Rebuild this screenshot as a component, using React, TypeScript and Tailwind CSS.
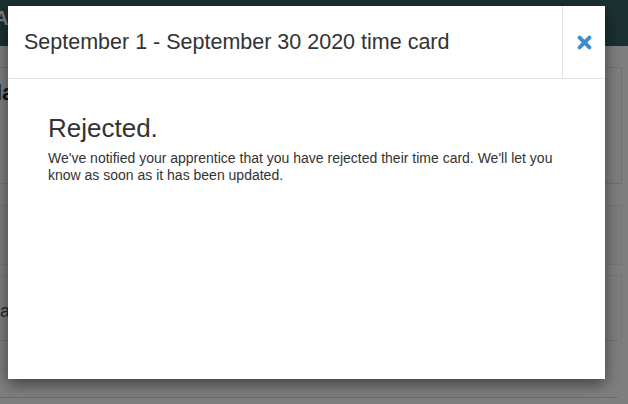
export default function App() {
  return (
    <div className="relative h-[404px] w-[628px] overflow-hidden bg-white font-['Liberation_Sans',Arial,sans-serif]">
      {/* page behind the modal */}
      <div className="h-[46px] bg-[#386262] pt-[6px] text-[20px] font-bold leading-[24px] text-white">
        <span className="-ml-[6px]">Ap</span>
      </div>
      <div className="flex flex-col pr-[6px]">
        <div className="mt-[21px] h-[117px] border border-l-0 border-[#e3e3e3] pt-[12px]">
          <span className="-ml-[4px] text-[22px] font-bold leading-[26px] text-[#222]">lan</span>
        </div>
        <div className="mt-[21px] h-[60px] border border-l-0 border-[#ececec] bg-[#fbfbfb]" />
        <div className="mt-[10px] h-[65px] border-t border-r border-[#ececec] pt-[24px]">
          <span className="-ml-[4px] text-[18px] leading-[21px] text-[#555]">la</span>
        </div>
        <div className="mr-[4px] h-[57px] border-t border-[#e0e0e0]" />
        <div className="mr-[4px] border-t border-[#dcdcdc]" />
      </div>

      {/* backdrop */}
      <div className="absolute inset-0 bg-black/50" />

      {/* modal */}
      <div className="absolute left-[8px] top-[6px] flex h-[373px] w-[597px] flex-col bg-white shadow-[0_5px_15px_rgba(0,0,0,0.5)]">
        <div className="flex h-[73px] border-b border-[#e5e5e5]">
          <h4 className="flex flex-1 items-center pl-[16px] text-[21.5px] leading-[24px] text-[#333]">
            September 1 - September 30 2020 time card
          </h4>
          <button className="flex w-[43px] items-center justify-center border-l border-[#e5e5e5]">
            <svg width="15" height="15" viewBox="0 0 15 15" aria-hidden="true">
              <path
                d="M2.6 2.6 L12.4 12.4 M12.4 2.6 L2.6 12.4"
                stroke="#428bca"
                strokeWidth="3.8"
                strokeLinecap="round"
                fill="none"
              />
            </svg>
          </button>
        </div>
        <div className="pl-[40px] pr-[40px] pt-[35px]">
          <h3 className="text-[26px] leading-[28px] text-[#333]">Rejected.</h3>
          <p className="mt-[8px] text-[14px] leading-[17px] text-[#333]">
            We've notified your apprentice that you have rejected their time card. We'll let you know as soon as it
            has been updated.
          </p>
        </div>
      </div>
    </div>
  )
}
